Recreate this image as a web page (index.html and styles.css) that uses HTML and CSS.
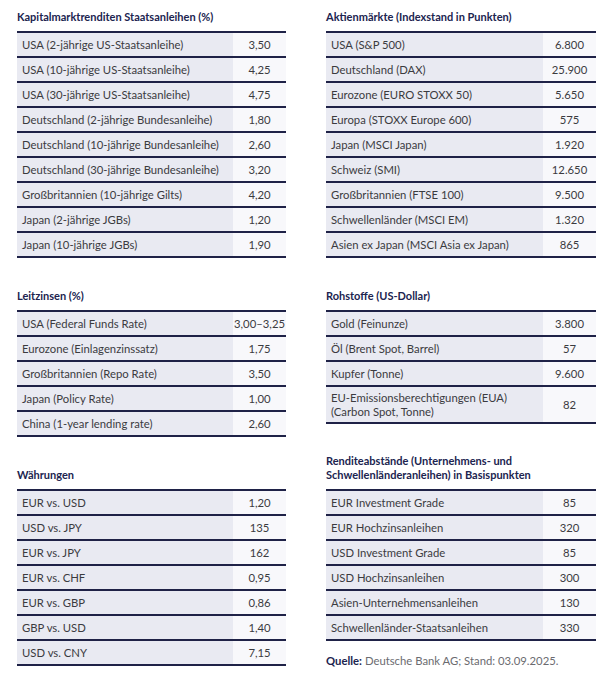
FILE: index.html
```html
<!DOCTYPE html>
<html lang="de">
<head>
<meta charset="utf-8">
<title>Marktdaten</title>
<link rel="stylesheet" href="styles.css">
</head>
<body>
<main class="page">
  <section class="section">
    <h2 class="title title--short">Kapitalmarktrenditen Staatsanleihen (%)</h2>
    <table class="data">
      <tr><td class="label">USA (2-jährige US-Staatsanleihe)</td><td class="value">3,50</td></tr>
      <tr><td class="label">USA (10-jährige US-Staatsanleihe)</td><td class="value">4,25</td></tr>
      <tr><td class="label">USA (30-jährige US-Staatsanleihe)</td><td class="value">4,75</td></tr>
      <tr><td class="label">Deutschland (2-jährige Bundesanleihe)</td><td class="value">1,80</td></tr>
      <tr><td class="label">Deutschland (10-jährige Bundesanleihe)</td><td class="value">2,60</td></tr>
      <tr><td class="label">Deutschland (30-jährige Bundesanleihe)</td><td class="value">3,20</td></tr>
      <tr><td class="label">Großbritannien (10-jährige Gilts)</td><td class="value">4,20</td></tr>
      <tr><td class="label">Japan (2-jährige JGBs)</td><td class="value">1,20</td></tr>
      <tr><td class="label">Japan (10-jährige JGBs)</td><td class="value">1,90</td></tr>
    </table>
  </section>
  <section class="section">
    <h2 class="title title--short">Aktienmärkte (Indexstand in Punkten)</h2>
    <table class="data">
      <tr><td class="label">USA (S&amp;P 500)</td><td class="value">6.800</td></tr>
      <tr><td class="label">Deutschland (DAX)</td><td class="value">25.900</td></tr>
      <tr><td class="label">Eurozone (EURO STOXX 50)</td><td class="value">5.650</td></tr>
      <tr><td class="label">Europa (STOXX Europe 600)</td><td class="value">575</td></tr>
      <tr><td class="label">Japan (MSCI Japan)</td><td class="value">1.920</td></tr>
      <tr><td class="label">Schweiz (SMI)</td><td class="value">12.650</td></tr>
      <tr><td class="label">Großbritannien (FTSE 100)</td><td class="value">9.500</td></tr>
      <tr><td class="label">Schwellenländer (MSCI EM)</td><td class="value">1.320</td></tr>
      <tr><td class="label">Asien ex Japan (MSCI Asia ex Japan)</td><td class="value">865</td></tr>
    </table>
  </section>
  <section class="section">
    <h2 class="title">Leitzinsen (%)</h2>
    <table class="data">
      <tr><td class="label">USA (Federal Funds Rate)</td><td class="value">3,00–3,25</td></tr>
      <tr><td class="label">Eurozone (Einlagenzinssatz)</td><td class="value">1,75</td></tr>
      <tr><td class="label">Großbritannien (Repo Rate)</td><td class="value">3,50</td></tr>
      <tr><td class="label">Japan (Policy Rate)</td><td class="value">1,00</td></tr>
      <tr><td class="label">China (1-year lending rate)</td><td class="value">2,60</td></tr>
    </table>
  </section>
  <section class="section">
    <h2 class="title">Rohstoffe (US-Dollar)</h2>
    <table class="data">
      <tr><td class="label">Gold (Feinunze)</td><td class="value">3.800</td></tr>
      <tr><td class="label">Öl (Brent Spot, Barrel)</td><td class="value">57</td></tr>
      <tr><td class="label">Kupfer (Tonne)</td><td class="value">9.600</td></tr>
      <tr class="tall"><td class="label">EU-Emissionsberechtigungen (EUA)<br>(Carbon Spot, Tonne)</td><td class="value">82</td></tr>
    </table>
  </section>
  <section class="section">
    <h2 class="title">Währungen</h2>
    <table class="data">
      <tr><td class="label">EUR vs. USD</td><td class="value">1,20</td></tr>
      <tr><td class="label">USD vs. JPY</td><td class="value">135</td></tr>
      <tr><td class="label">EUR vs. JPY</td><td class="value">162</td></tr>
      <tr><td class="label">EUR vs. CHF</td><td class="value">0,95</td></tr>
      <tr><td class="label">EUR vs. GBP</td><td class="value">0,86</td></tr>
      <tr><td class="label">GBP vs. USD</td><td class="value">1,40</td></tr>
      <tr><td class="label">USD vs. CNY</td><td class="value">7,15</td></tr>
    </table>
  </section>
  <section class="section">
    <h2 class="title">Renditeabstände (Unternehmens- und<br>Schwellenländeranleihen) in Basispunkten</h2>
    <table class="data">
      <tr><td class="label">EUR Investment Grade</td><td class="value">85</td></tr>
      <tr><td class="label">EUR Hochzinsanleihen</td><td class="value">320</td></tr>
      <tr><td class="label">USD Investment Grade</td><td class="value">85</td></tr>
      <tr><td class="label">USD Hochzinsanleihen</td><td class="value">300</td></tr>
      <tr><td class="label">Asien-Unternehmensanleihen</td><td class="value">130</td></tr>
      <tr><td class="label">Schwellenländer-Staatsanleihen</td><td class="value">330</td></tr>
    </table>
    <p class="source"><strong>Quelle:</strong> Deutsche Bank AG; Stand: 03.09.2025.</p>
  </section>
</main>
</body>
</html>
```

FILE: styles.css
```css
* { box-sizing: border-box; }

html, body {
  margin: 0;
  padding: 0;
  background: #ffffff;
}

body {
  font-family: Lato, "Open Sans", "Liberation Sans", sans-serif;
  font-size: 11.3px;
  color: #3b3b3f;
}

.page {
  display: grid;
  grid-template-columns: 269px 270px;
  column-gap: 40px;
  row-gap: 17px;
  align-items: start;
  padding: 10px 0 0 17px;
}

.section {
  display: flex;
  flex-direction: column;
}

.title {
  margin: 0;
  padding-bottom: 7px;
  min-height: 35px;
  display: flex;
  align-items: flex-end;
  font-size: 11px;
  line-height: 14px;
  font-weight: 700;
  color: #20244f;
}

.title--short {
  min-height: 0;
}

.data {
  width: 100%;
  border-collapse: collapse;
  table-layout: fixed;
  border-top: 2px solid #1f2247;
}

.data tr {
  border-bottom: 2px solid #1f2247;
}

.data td {
  height: 25px;
  padding: 0 5px;
  line-height: 14px;
  vertical-align: middle;
}

.data .tall td {
  height: 37px;
}

.label {
  background: #e9eaf2;
}

.value {
  width: 53px;
  text-align: center;
  white-space: nowrap;
  background: #f8f8fb;
}

.data td.value {
  padding: 0;
}

.source {
  margin: 13px 0 0;
  line-height: 14px;
  color: #6b6b70;
}

.source strong {
  color: #20244f;
  font-weight: 700;
}
```
